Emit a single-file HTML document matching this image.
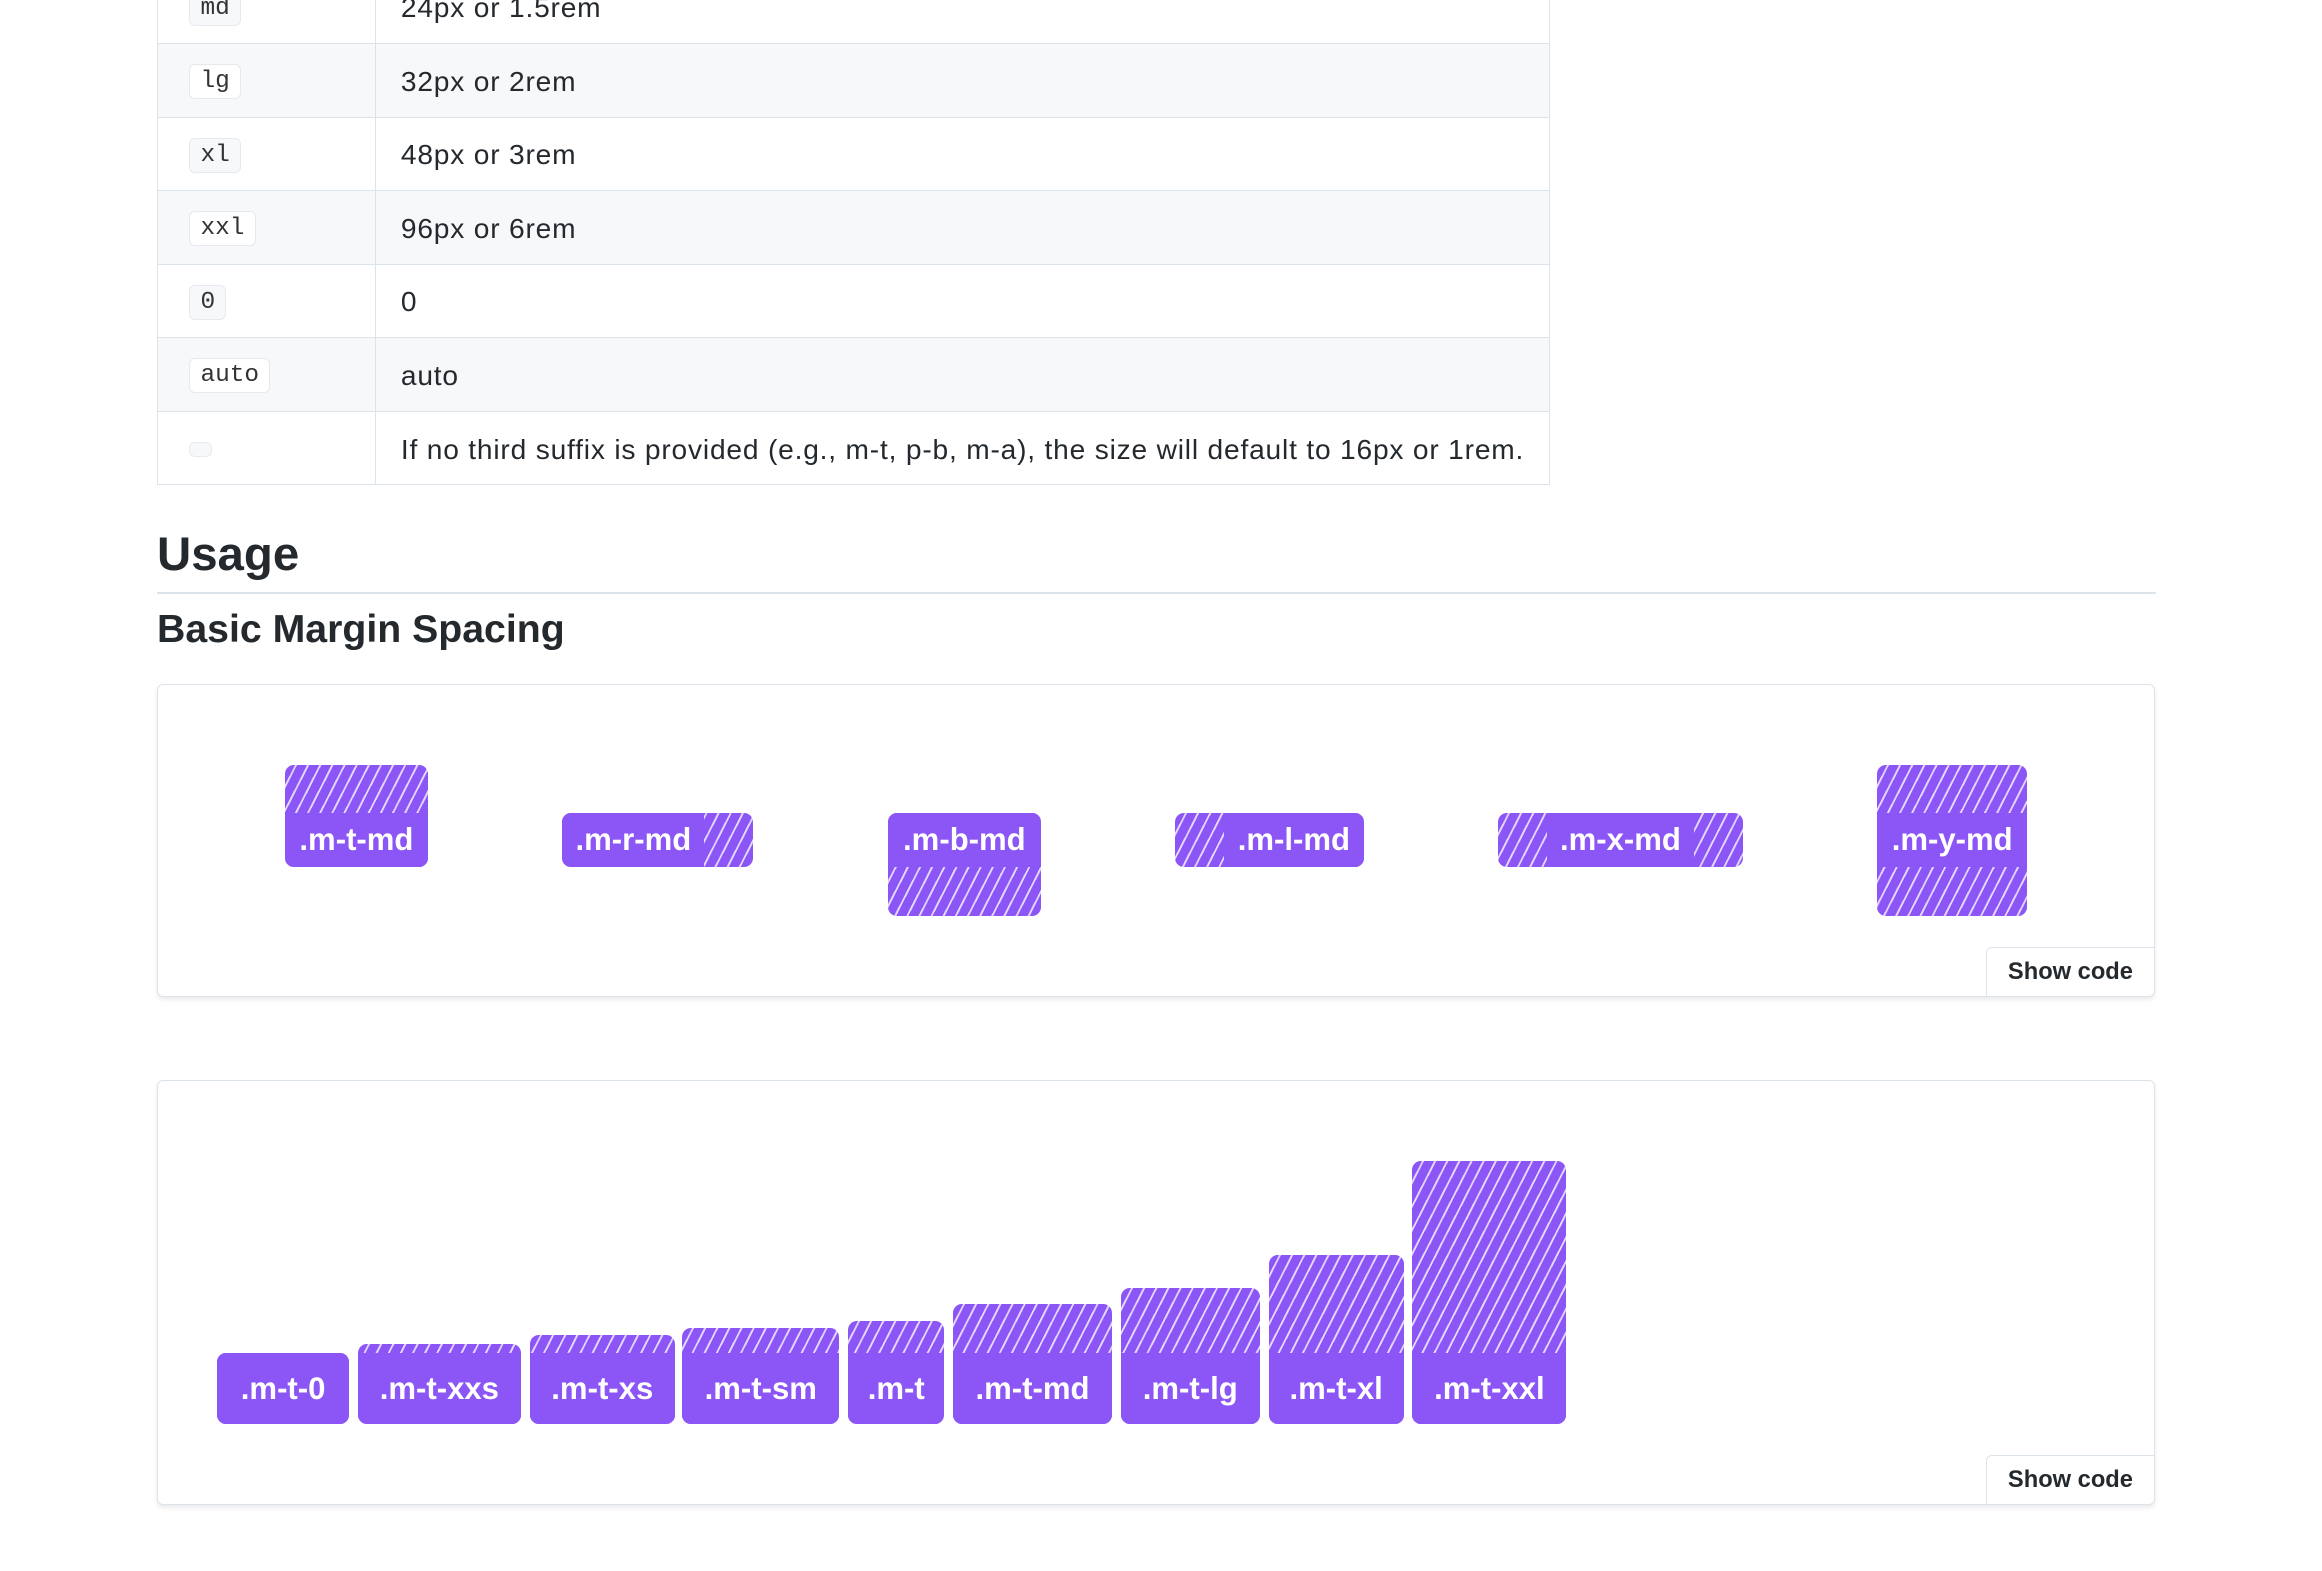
<!DOCTYPE html>
<html><head><meta charset="utf-8"><style>
html,body{margin:0;padding:0;background:#fff;}
body{width:2322px;height:1568px;overflow:hidden;}
#w{zoom:1.481;width:1568px;height:1060px;position:relative;top:1px;font-family:"Liberation Sans",sans-serif;color:#24292e;}
.tbl{position:absolute;left:106px;top:-21px;width:939px;border-left:1px solid #dde3ea;border-right:1px solid #dde3ea;}
.row{height:49px;border-bottom:1px solid #dde3ea;display:flex;align-items:center;position:relative;}
.row.g{background:#f6f8fa;}
.row .c1{width:147px;height:100%;border-right:1px solid #dde3ea;display:flex;align-items:center;box-sizing:border-box;padding-left:21px;padding-top:2px;}
.row .c2{padding-left:17px;font-size:19px;letter-spacing:0.55px;padding-top:2px;}
code{font-family:"Liberation Mono",monospace;font-size:16.5px;background:#f6f8fa;border:1px solid #e6eaef;border-radius:4px;padding:2px 7px;color:#333;}
.row.g code{background:#fff;}
h2{position:absolute;left:106px;top:355px;margin:0;font-size:32px;font-weight:bold;}
.hr{position:absolute;left:106px;top:399px;width:1350px;height:1px;background:#dde3ea;}
h3{position:absolute;left:106px;top:409px;margin:0;font-size:26.5px;font-weight:bold;}
.card{position:absolute;left:106px;width:1348px;border:1px solid #dde3ea;border-radius:4px;box-shadow:0 2px 3px rgba(0,0,0,.08);background:#fff;}
.btn{position:absolute;right:0;bottom:0;width:114px;height:33px;border-left:1px solid #dde3ea;border-top:1px solid #dde3ea;border-top-left-radius:4px;font-weight:bold;font-size:16px;display:flex;align-items:center;justify-content:center;box-sizing:border-box;}
.h{position:absolute;border-radius:6px;background:#8c56f6 repeating-linear-gradient(117deg,#8c56f6 0 6px,rgba(255,255,255,.75) 6px 7.3px);overflow:hidden;}
.l{position:absolute;background:#8c56f6;color:#fff;font-weight:bold;font-size:21px;display:flex;align-items:center;justify-content:center;white-space:nowrap;}
</style></head><body><div id="w">
<div class="tbl">
<div class="row"><div class="c1"><code>md</code></div><div class="c2">24px or 1.5rem</div></div>
<div class="row g"><div class="c1"><code>lg</code></div><div class="c2">32px or 2rem</div></div>
<div class="row"><div class="c1"><code>xl</code></div><div class="c2">48px or 3rem</div></div>
<div class="row g"><div class="c1"><code>xxl</code></div><div class="c2">96px or 6rem</div></div>
<div class="row"><div class="c1"><code>0</code></div><div class="c2">0</div></div>
<div class="row g"><div class="c1"><code>auto</code></div><div class="c2">auto</div></div>
<div class="row"><div class="c1"><code style="padding:0 7px;height:9px;display:inline-block"></code></div><div class="c2">If no third suffix is provided (e.g., m-t, p-b, m-a), the size will default to 16px or 1rem.</div></div>
</div>
<h2>Usage</h2><div class="hr"></div>
<h3>Basic Margin Spacing</h3>
<div class="card" style="top:461px;height:210px;">
<div class="h" style="left:86px;top:54px;width:96px;height:69px"><div class="l" style="left:0;right:0;top:32px;bottom:0">.m-t-md</div></div>
<div class="h" style="left:273px;top:86px;width:129px;height:37px"><div class="l" style="left:0;width:96px;top:0;bottom:0">.m-r-md</div></div>
<div class="h" style="left:493px;top:86px;width:103px;height:70px"><div class="l" style="left:0;right:0;top:0;height:37px">.m-b-md</div></div>
<div class="h" style="left:687px;top:86px;width:127px;height:37px"><div class="l" style="left:33px;right:0;top:0;bottom:0">.m-l-md</div></div>
<div class="h" style="left:905px;top:86px;width:165px;height:37px"><div class="l" style="left:33px;right:33px;top:0;bottom:0">.m-x-md</div></div>
<div class="h" style="left:1161px;top:54px;width:101px;height:102px"><div class="l" style="left:0;right:0;top:32px;height:37px">.m-y-md</div></div>
<div class="btn">Show code</div>
</div>
<div class="card" style="top:728px;height:286px;">
<div class="h" style="left:40px;top:184px;width:89px;height:48px"><div class="l" style="left:0;right:0;bottom:0;height:48px">.m-t-0</div></div>
<div class="h" style="left:135px;top:178px;width:110px;height:54px"><div class="l" style="left:0;right:0;bottom:0;height:48px">.m-t-xxs</div></div>
<div class="h" style="left:251px;top:172px;width:98px;height:60px"><div class="l" style="left:0;right:0;bottom:0;height:48px">.m-t-xs</div></div>
<div class="h" style="left:354px;top:167px;width:106px;height:65px"><div class="l" style="left:0;right:0;bottom:0;height:48px">.m-t-sm</div></div>
<div class="h" style="left:466px;top:162px;width:65px;height:70px"><div class="l" style="left:0;right:0;bottom:0;height:48px">.m-t</div></div>
<div class="h" style="left:537px;top:151px;width:107px;height:81px"><div class="l" style="left:0;right:0;bottom:0;height:48px">.m-t-md</div></div>
<div class="h" style="left:650px;top:140px;width:94px;height:92px"><div class="l" style="left:0;right:0;bottom:0;height:48px">.m-t-lg</div></div>
<div class="h" style="left:750px;top:118px;width:91px;height:114px"><div class="l" style="left:0;right:0;bottom:0;height:48px">.m-t-xl</div></div>
<div class="h" style="left:847px;top:54px;width:104px;height:178px"><div class="l" style="left:0;right:0;bottom:0;height:48px">.m-t-xxl</div></div>
<div class="btn">Show code</div>
</div>
</div></body></html>
